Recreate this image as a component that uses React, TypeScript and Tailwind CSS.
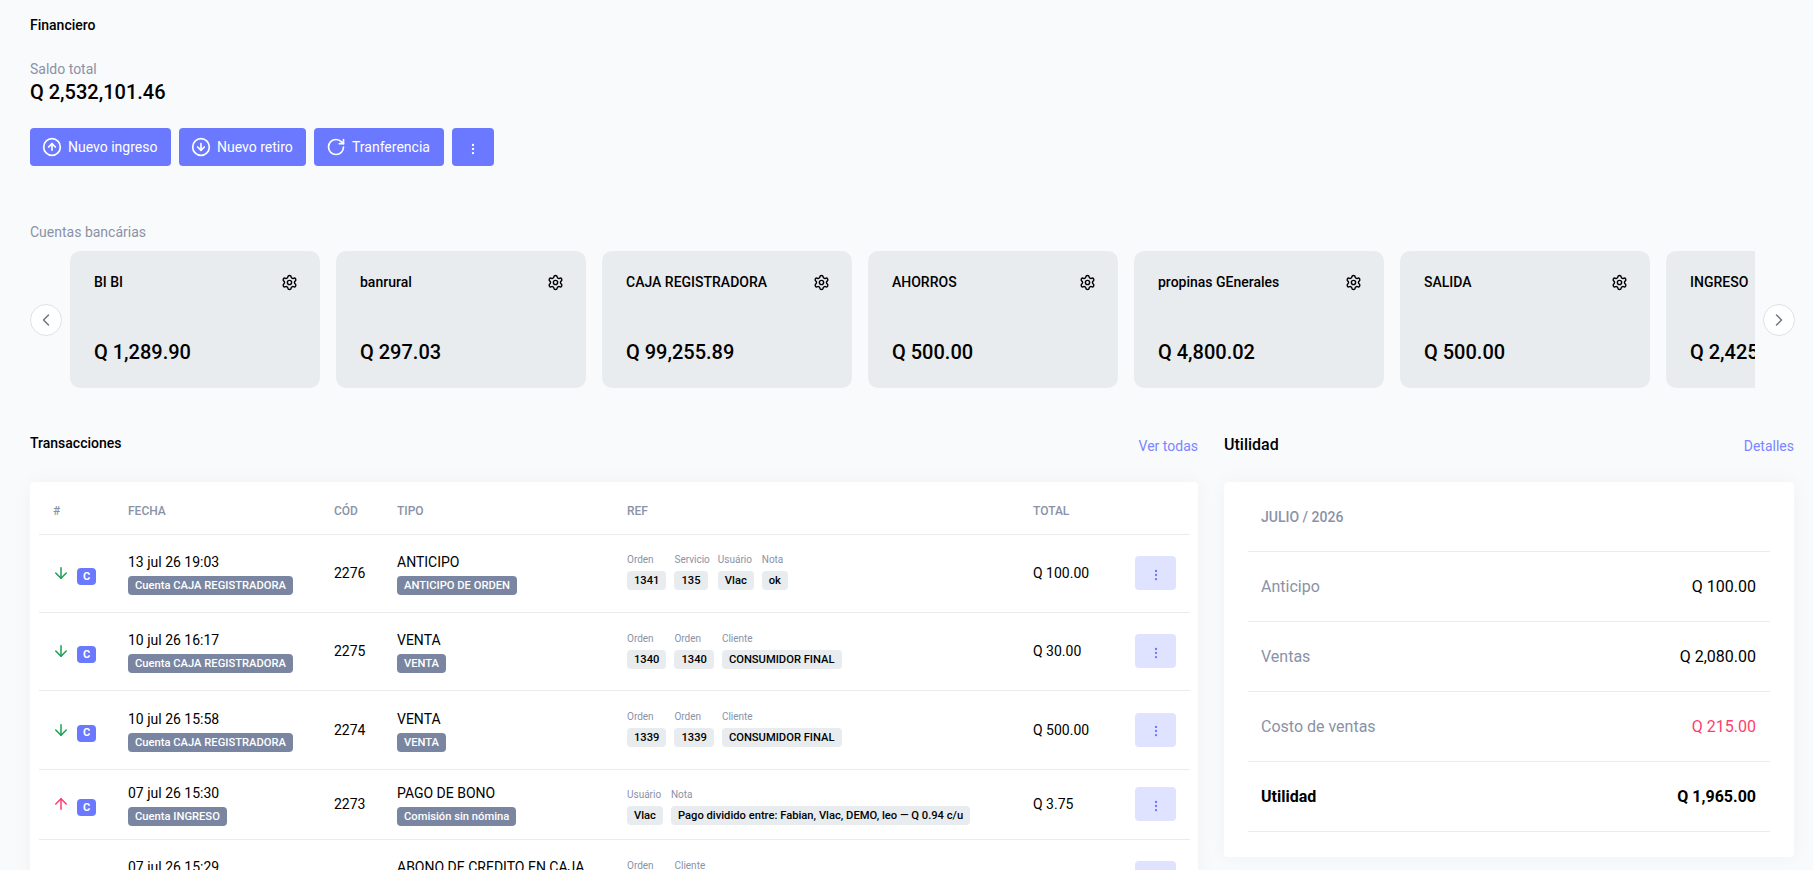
import { ArrowDown, ArrowUp, ChevronLeft, ChevronRight, CircleArrowDown, CircleArrowUp, EllipsisVertical, RotateCw, Settings } from "lucide-react";

const accounts = [
  { name: "BI BI", amount: "Q 1,289.90" },
  { name: "banrural", amount: "Q 297.03" },
  { name: "CAJA REGISTRADORA", amount: "Q 99,255.89" },
  { name: "AHORROS", amount: "Q 500.00" },
  { name: "propinas GEnerales", amount: "Q 4,800.02" },
  { name: "SALIDA", amount: "Q 500.00" },
  { name: "INGRESO", amount: "Q 2,425.00" },
];

type Tx = {
  up?: boolean;
  date: string;
  account: string;
  code: string;
  type: string;
  typeBadge: string;
  refs: [string, string][];
  total: string;
  height: string;
  refPad: string;
};

const txs: Tx[] = [
  { date: "13 jul 26 19:03", account: "Cuenta CAJA REGISTRADORA", code: "2276", type: "ANTICIPO", typeBadge: "ANTICIPO DE ORDEN", refs: [["Orden", "1341"], ["Servicio", "135"], ["Usuário", "Vlac"], ["Nota", "ok"]], total: "Q 100.00", height: "h-[78px]", refPad: "pt-[18px]" },
  { date: "10 jul 26 16:17", account: "Cuenta CAJA REGISTRADORA", code: "2275", type: "VENTA", typeBadge: "VENTA", refs: [["Orden", "1340"], ["Orden", "1340"], ["Cliente", "CONSUMIDOR FINAL"]], total: "Q 30.00", height: "h-[78px]", refPad: "pt-[19px]" },
  { date: "10 jul 26 15:58", account: "Cuenta CAJA REGISTRADORA", code: "2274", type: "VENTA", typeBadge: "VENTA", refs: [["Orden", "1339"], ["Orden", "1339"], ["Cliente", "CONSUMIDOR FINAL"]], total: "Q 500.00", height: "h-[79px]", refPad: "pt-[19px]" },
  { up: true, date: "07 jul 26 15:30", account: "Cuenta INGRESO", code: "2273", type: "PAGO DE BONO", typeBadge: "Comisión sin nómina", refs: [["Usuário", "Vlac"], ["Nota", "Pago dividido entre: Fabian, Vlac, DEMO, leo — Q 0.94 c/u"]], total: "Q 3.75", height: "h-[70px]", refPad: "pt-[18px]" },
  { date: "07 jul 26 15:29", account: "Cuenta CAJA REGISTRADORA", code: "2272", type: "ABONO DE CREDITO EN CAJA", typeBadge: "ABONO", refs: [["Orden", "1338"], ["Cliente", "CONSUMIDOR FINAL"]], total: "Q 200.00", height: "h-[78px]", refPad: "pt-[19px]" },
];

const summary = [
  { label: "Anticipo", value: "Q 100.00", labelClass: "text-[#8a92a6]", valueClass: "text-black" },
  { label: "Ventas", value: "Q 2,080.00", labelClass: "text-[#8a92a6]", valueClass: "text-black" },
  { label: "Costo de ventas", value: "Q 215.00", labelClass: "text-[#8a92a6]", valueClass: "text-[#ff3d6b]" },
  { label: "Utilidad", value: "Q 1,965.00", labelClass: "text-black font-bold", valueClass: "text-black font-bold" },
];

function Badge({ children }: { children: string }) {
  return (
    <span className="inline-block rounded-[4px] bg-[#7a86a1] px-[7px] py-1 text-[11.2px] font-medium leading-[11px] text-white whitespace-nowrap">
      {children}
    </span>
  );
}

function ActionButton({ children, icon, width }: { children: string; icon: React.ReactNode; width: string }) {
  return (
    <button className={`flex h-[38px] items-center gap-2 rounded-[4px] bg-[#6a79ff] pl-[14px] text-sm whitespace-nowrap text-white ${width}`}>
      {icon}
      {children}
    </button>
  );
}

function NavButton({ children }: { children: React.ReactNode }) {
  return (
    <button className="flex h-8 w-8 shrink-0 items-center justify-center rounded-full border border-[#dee2e6] bg-white text-[#6c757d]">
      {children}
    </button>
  );
}

export default function App() {
  return (
    <div className="h-[870px] overflow-hidden bg-[#f9fafc] px-[30px] pt-[15px] font-['Roboto',sans-serif] text-black">
      <h1 className="text-sm leading-[21px] font-medium">Financiero</h1>

      <p className="mt-[23px] text-sm leading-[21px] text-[#8a92a6]">Saldo total</p>
      <p className="text-xl leading-[24px] font-medium">Q 2,532,101.46</p>

      <div className="mt-[24px] flex gap-2">
        <ActionButton width="w-[141px]" icon={<CircleArrowUp size={20} className="-mx-[2px] shrink-0" />}>Nuevo ingreso</ActionButton>
        <ActionButton width="w-[127px]" icon={<CircleArrowDown size={20} className="-mx-[2px] shrink-0" />}>Nuevo retiro</ActionButton>
        <ActionButton width="w-[130px]" icon={<RotateCw size={20} className="-mx-[2px] shrink-0" />}>Tranferencia</ActionButton>
        <button className="flex h-[38px] w-[42px] items-center justify-center rounded-[4px] bg-[#6a79ff] pt-[3px] text-white">
          <EllipsisVertical size={14} />
        </button>
      </div>

      <p className="mt-[56px] text-sm leading-[21px] text-[#8a92a6]">Cuentas bancárias</p>

      <div className="mt-2 flex items-center gap-2">
        <NavButton>
          <ChevronLeft size={20} strokeWidth={1.75} className="shrink-0" />
        </NavButton>
        <div className="flex w-[1685px] shrink-0 gap-4 overflow-hidden">
          {accounts.map((a) => (
            <div key={a.name} className="flex h-[137px] w-[250px] shrink-0 flex-col justify-between rounded-[10px] bg-[#e9ecef] px-6 pt-[21px] pb-[21px]">
              <div className="flex items-center justify-between">
                <span className="text-sm leading-[21px] font-medium whitespace-nowrap">{a.name}</span>
                <Settings size={17} className="-mr-[1.5px] shrink-0" />
              </div>
              <span className="text-xl leading-[30px] font-medium whitespace-nowrap">{a.amount}</span>
            </div>
          ))}
        </div>
        <NavButton>
          <ChevronRight size={20} strokeWidth={1.75} className="shrink-0" />
        </NavButton>
      </div>

      <div className="mt-[45px] grid grid-cols-[1168px_570px] gap-[26px]">
        <section>
          <div className="flex h-[49px] items-start justify-between">
            <h2 className="text-sm leading-[21px] font-medium">Transacciones</h2>
            <a className="mt-[3px] text-sm leading-[21px] text-[#7a85ff]">Ver todas</a>
          </div>
          <div className="rounded-[4px] bg-white pr-[8px] pl-[9px] shadow-[0_0_20px_rgba(0,0,0,0.04)]">
            <table className="w-[1151px] table-fixed border-collapse">
              <colgroup>
                <col className="w-[75px]" />
                <col className="w-[206px]" />
                <col className="w-[63px]" />
                <col className="w-[230px]" />
                <col className="w-[406px]" />
                <col className="w-[102px]" />
                <col className="w-[69px]" />
              </colgroup>
              <thead>
                <tr className="h-[52px] border-b border-[#e9ecef] text-left text-xs font-medium text-[#8a92a6]">
                  <th className="px-[14px] pt-[6px] font-medium">#</th>
                  <th className="px-[14px] pt-[6px] font-medium">FECHA</th>
                  <th className="px-[14px] pt-[6px] font-medium">CÓD</th>
                  <th className="px-[14px] pt-[6px] font-medium">TIPO</th>
                  <th className="px-[14px] pt-[6px] font-medium">REF</th>
                  <th className="px-[14px] pt-[6px] font-medium">TOTAL</th>
                  <th />
                </tr>
              </thead>
              <tbody>
                {txs.map((t) => (
                  <tr key={t.code} className={`${t.height} border-b border-[#e9ecef] text-sm`}>
                    <td className="px-[14px] align-middle">
                      <div className="flex items-center gap-2">
                        {t.up ? <ArrowUp size={18} className="-mx-[1px] shrink-0 text-[#ff3d6b]" /> : <ArrowDown size={18} className="-mx-[1px] shrink-0 text-[#1aa053]" />}
                        <span className="mt-[7px] flex h-[17px] w-[19px] shrink-0 items-center justify-center rounded-[4px] bg-[#6a79ff] text-[11px] font-bold text-white">C</span>
                      </div>
                    </td>
                    <td className="px-[14px] align-middle">
                      <div className="leading-[23px]">{t.date}</div>
                      <Badge>{t.account}</Badge>
                    </td>
                    <td className="px-[14px] align-middle">{t.code}</td>
                    <td className="px-[14px] align-middle">
                      <div className="leading-[23px] whitespace-nowrap">{t.type}</div>
                      <Badge>{t.typeBadge}</Badge>
                    </td>
                    <td className={`px-[14px] align-top ${t.refPad}`}>
                      <div className="flex gap-2">
                        {t.refs.map(([label, value], i) => (
                          <div key={i} className="flex flex-col items-start">
                            <span className="mb-[5px] text-[10px] leading-[13px] text-[#8a92a6]">{label}</span>
                            <span className="rounded-[4px] bg-[#e9ecef] px-[7px] py-1 text-[11.2px] font-medium leading-[11px] whitespace-nowrap">{value}</span>
                          </div>
                        ))}
                      </div>
                    </td>
                    <td className="px-[14px] align-middle whitespace-nowrap">{t.total}</td>
                    <td className="align-middle">
                      <button className="ml-[14px] flex h-[34px] w-[41px] items-center justify-center rounded-[4px] bg-[#e0e3ff] pt-[3px] text-[#6a79ff]">
                        <EllipsisVertical size={14} />
                      </button>
                    </td>
                  </tr>
                ))}
              </tbody>
            </table>
          </div>
        </section>

        <section>
          <div className="flex h-[49px] items-start justify-between">
            <h2 className="text-base leading-6 font-medium">Utilidad</h2>
            <a className="mt-[3px] text-sm leading-[21px] text-[#7a85ff]">Detalles</a>
          </div>
          <div className="h-[375px] w-[570px] rounded-[4px] bg-white px-6 shadow-[0_0_20px_rgba(0,0,0,0.04)]">
            <div className="flex h-[70px] items-center border-b border-[#e9ecef] pr-[14px] pl-[13px] text-sm font-medium text-[#8a92a6]">JULIO / 2026</div>
            {summary.map((s) => (
              <div key={s.label} className="flex h-[70px] items-center justify-between border-b border-[#e9ecef] pr-[14px] pl-[13px] text-base">
                <span className={s.labelClass}>{s.label}</span>
                <span className={s.valueClass}>{s.value}</span>
              </div>
            ))}
          </div>
        </section>
      </div>
    </div>
  );
}
